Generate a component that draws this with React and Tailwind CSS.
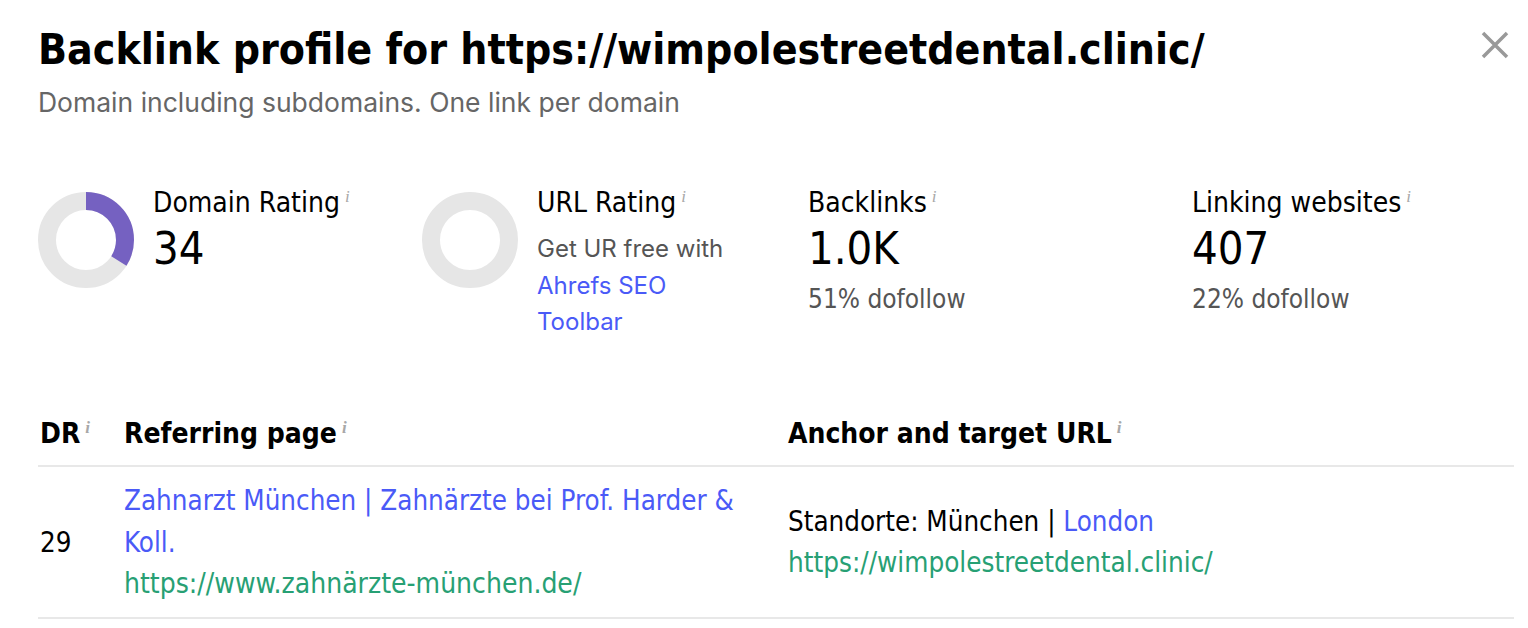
import React from 'react';

const cond = { fontFamily: '"Liberation Sans Narrow", "DejaVu Sans Condensed", "Roboto", sans-serif' };

const Info = () => (
  <span className="ml-[5px] align-super text-[17px] italic text-[#a8a8a8]" style={{ fontFamily: '"Liberation Serif", serif' }}>i</span>
);

const Donut = ({ value }) => {
  const r = 39;
  const c = 2 * Math.PI * r;
  return (
    <svg width="96" height="96" viewBox="0 0 96 96" className="shrink-0">
      <circle cx="48" cy="48" r={r} fill="none" stroke="#e6e6e6" strokeWidth="18" />
      {value > 0 && (
        <circle
          cx="48"
          cy="48"
          r={r}
          fill="none"
          stroke="#7561c1"
          strokeWidth="18"
          strokeDasharray={`${(c * value) / 100} ${c}`}
          transform="rotate(-90 48 48)"
        />
      )}
    </svg>
  );
};

const Stat = ({ label, value, sub }) => (
  <div className="flex flex-col">
    <div className="-mt-[5px] text-[28px] leading-[20px] text-black" style={cond}>
      {label}
      <Info />
    </div>
    <div className="mt-[11px] text-[45px] leading-[50px] text-black" style={cond}>{value}</div>
    {sub && <div className="mt-[9px] text-[26px] leading-[32px] text-[#555]" style={cond}>{sub}</div>}
  </div>
);

export default function App() {
  return (
    <div className="relative h-[628px] w-[1528px] overflow-hidden bg-white px-[38px] pt-[24px]" style={{ fontFamily: 'Inter, sans-serif' }}>
      <button className="absolute right-[18px] top-[30px] text-[#999]" aria-label="Close">
        <svg width="30" height="30" viewBox="0 0 30 30">
          <path d="M3 3 L27 27 M27 3 L3 27" stroke="currentColor" strokeWidth="3.5" />
        </svg>
      </button>

      <h1 className="text-[42.4px] font-bold leading-[52px] text-black" style={cond}>
        Backlink profile for https://wimpolestreetdental.clinic/
      </h1>
      <p className="mt-[11px] text-[26.5px] leading-[30px] text-[#666]">Domain including subdomains. One link per domain</p>

      <div className="mt-[75px] flex">
        <div className="flex w-[384px] gap-[19px]">
          <Donut value={34} />
          <Stat label="Domain Rating" value="34" />
        </div>
        <div className="flex w-[386px] gap-[19px]">
          <Donut value={0} />
          <div className="flex flex-col">
            <div className="-mt-[5px] text-[28px] leading-[20px] text-black" style={cond}>
              URL Rating
              <Info />
            </div>
            <div className="mt-[18px] w-[200px] text-[24px] leading-[36.5px] text-[#555]">
              Get UR free with <a className="text-[#4a5af7]" href="#">Ahrefs SEO Toolbar</a>
            </div>
          </div>
        </div>
        <div className="w-[384px]">
          <Stat label="Backlinks" value="1.0K" sub="51% dofollow" />
        </div>
        <div>
          <Stat label="Linking websites" value="407" sub="22% dofollow" />
        </div>
      </div>

      <div className="mt-[62px] w-[1476px]">
        <div className="flex h-[64px] items-center border-b-2 border-[#e8e8e8] text-[28px] font-bold text-black" style={cond}>
          <div className="w-[86px] pl-[2px]">DR<Info /></div>
          <div className="w-[664px]">Referring page<Info /></div>
          <div>Anchor and target URL<Info /></div>
        </div>
        <div className="flex items-center border-b-2 border-[#e8e8e8] py-[12px] text-[27.5px] leading-[42px]" style={cond}>
          <div className="w-[86px] pl-[2px] text-black">29</div>
          <div className="w-[664px] pr-[36px]">
            <a href="#" className="text-[#4a5af7]">Zahnarzt München | Zahnärzte bei Prof. Harder &amp; Koll.</a>
            <div className="text-[28px] text-[#27a074]">https://www.zahnärzte-münchen.de/</div>
          </div>
          <div>
            <div className="text-black">
              Standorte: München | <a href="#" className="text-[#4a5af7]">London</a>
            </div>
            <div className="text-[27.6px] text-[#27a074]">https://wimpolestreetdental.clinic/</div>
          </div>
        </div>
      </div>
    </div>
  );
}
